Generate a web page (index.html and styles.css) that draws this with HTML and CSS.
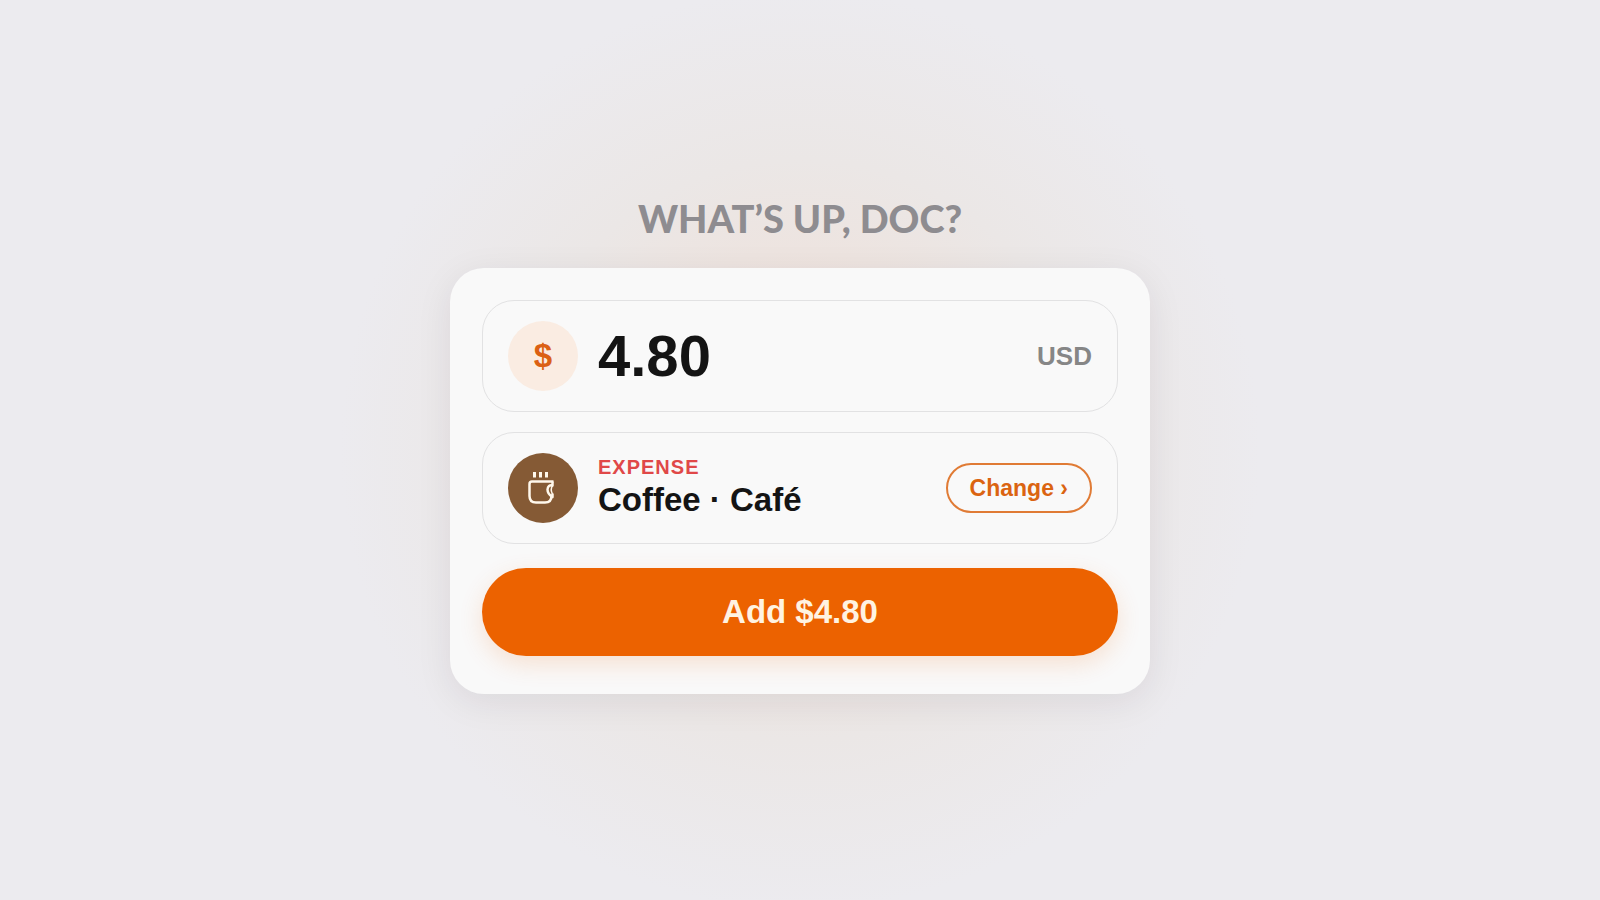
FILE: index.html
```html
<!DOCTYPE html>
<html lang="en">
<head>
<meta charset="utf-8">
<meta name="viewport" content="width=device-width, initial-scale=1">
<title>Add expense</title>
<link rel="stylesheet" href="styles.css">
</head>
<body>
<main class="page">
  <h1 class="title">WHAT’S UP, DOC?</h1>
  <form class="card">
    <div class="row">
      <label class="badge badge-currency" for="amount">$</label>
      <input class="amount" id="amount" type="text" inputmode="decimal" value="4.80">
      <span class="currency">USD</span>
    </div>
    <div class="row">
      <span class="badge badge-category">
        <svg class="mug" viewBox="0 0 36 36" aria-hidden="true">
          <path d="M9.500 2v5.500M15.500 2v5.500M21.500 2v5.500" stroke-width="3"/>
          <path d="M28.500 11.500H7Q4.500 11.500 4.500 14V26Q4.500 32.500 11 32.500H20Q26.500 32.500 26.500 26" stroke-width="2.500"/>
          <path d="M27.500 11.500V15.500Q23 14.500 22.500 19.500Q22.500 24 27.500 27V23.500" stroke-width="2.500"/>
          <path d="M27.500 15.500Q25 19.500 27.500 24" stroke-width="1.500"/>
        </svg>
      </span>
      <div class="category">
        <span class="kind">EXPENSE</span>
        <span class="name">Coffee · Café</span>
      </div>
      <button class="change" type="button">Change ›</button>
    </div>
    <button class="submit" type="button">Add $4.80</button>
  </form>
</main>
</body>
</html>
```
FILE: styles.css
```css
* {
  box-sizing: border-box;
}

body {
  margin: 0;
  font-family: "Liberation Sans", Arial, sans-serif;
  font-weight: 700;
  color: #141414;
  background: #ecebef;
}

.page {
  min-height: 100vh;
  display: flex;
  flex-direction: column;
  align-items: center;
  justify-content: center;
  gap: 34px;
  padding: 0 16px 4px;
  background: radial-gradient(circle at center, #f4ddd2 0, #ede4e0 200px, #ebe7e6 290px, #ecebef 460px);
}

.title {
  margin: 0;
  font-family: Lato, "Liberation Sans", sans-serif;
  font-size: 38px;
  font-weight: 900;
  line-height: 32px;
  color: #8e8c90;
}

.card {
  width: 100%;
  max-width: 700px;
  display: flex;
  flex-direction: column;
  gap: 20px;
  padding: 32px 32px 38px;
  border-radius: 34px;
  background: #f9f9f9;
  box-shadow: 0 8px 36px rgba(40, 30, 50, 0.08);
}

.row {
  display: flex;
  align-items: center;
  gap: 20px;
  padding: 20px 25px;
  border: 1px solid #e2e2e3;
  border-radius: 32px;
}

.badge {
  flex: none;
  display: flex;
  align-items: center;
  justify-content: center;
  width: 70px;
  height: 70px;
  border-radius: 50%;
}

.badge-currency {
  font-size: 33px;
  color: #db6014;
  background: #faece2;
}

.badge-category {
  background: #855a35;
}

.mug {
  width: 36px;
  height: 36px;
  fill: none;
  stroke: #fff8ec;
  stroke-linejoin: round;
}

.amount {
  flex: 1;
  min-width: 0;
  height: 70px;
  padding: 0 0 2px;
  border: 0;
  outline: 0;
  background: transparent;
  font: inherit;
  font-size: 58px;
  color: inherit;
}

.currency {
  font-size: 26px;
  color: #868686;
}

.category {
  flex: 1;
  min-width: 0;
  display: flex;
  flex-direction: column;
  padding-bottom: 2px;
}

.kind {
  font-size: 20px;
  line-height: 26px;
  letter-spacing: 1px;
  color: #e04848;
}

.name {
  font-size: 33px;
  line-height: 40px;
}

.change {
  flex: none;
  height: 50px;
  padding: 0 22px;
  border: 2px solid #e07b35;
  border-radius: 25px;
  background: transparent;
  font: inherit;
  font-size: 23px;
  color: #db6411;
}

.submit {
  height: 88px;
  margin-top: 4px;
  border: 0;
  border-radius: 44px;
  background: #ec6200;
  font: inherit;
  font-size: 33px;
  color: #fff3e2;
  box-shadow: 0 8px 24px rgba(236, 98, 0, 0.16);
}
```
